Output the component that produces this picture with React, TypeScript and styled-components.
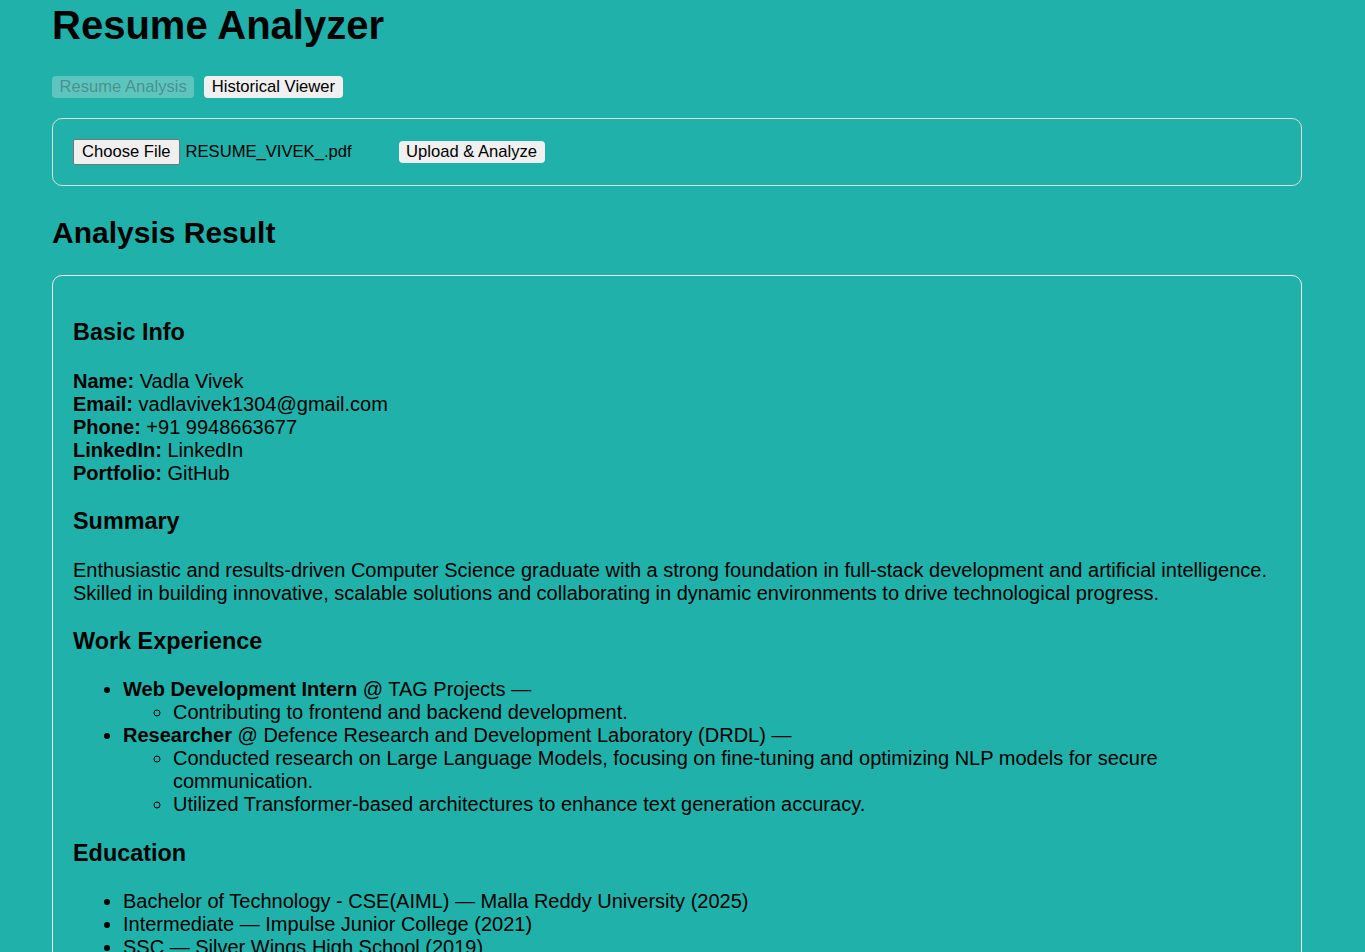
import { FC } from 'react';
import styled, { createGlobalStyle } from 'styled-components';

const GlobalStyle = createGlobalStyle`
  html, body {
    margin: 0;
    padding: 0;
    background: #20b2aa;
  }
  body {
    font-family: "Liberation Sans", Arial, sans-serif;
    font-size: 20px;
    color: #000;
  }
`;

const Page = styled.div`
  width: 1250px;
  margin-left: 52px;
  padding-top: 3px;
`;

const Title = styled.h1`
  font-size: 40px;
  font-weight: bold;
  margin: 0 0 28px;
`;

const Tabs = styled.div`
  display: flex;
  gap: 10px;
  margin-bottom: 20px;
`;

const Button = styled.button`
  font-family: inherit;
  font-size: 16.6px;
  line-height: 18px;
  padding: 2px 7.5px;
  border: none;
  border-radius: 4px;
  background: #f0f0f0;
  color: #000;
  cursor: pointer;
  &:disabled {
    background: rgba(239, 239, 239, 0.3);
    color: rgba(16, 16, 16, 0.3);
    cursor: default;
  }
`;

const Card = styled.div<{ $border: string }>`
  border: 1px solid ${({ $border }) => $border};
  border-radius: 10px;
  padding: 20px;
`;

const UploadRow = styled.div`
  display: flex;
  align-items: center;
`;

const FileButton = styled.span`
  display: inline-block;
  font-size: 16.6px;
  line-height: 20px;
  padding: 2px 8px;
  background: #efefef;
  border: 1px solid #767676;
  border-radius: 2px;
  margin-right: 6px;
`;

const FileName = styled.span`
  font-size: 16.6px;
  width: 213px;
`;

const SectionTitle = styled.h2`
  font-size: 30px;
  margin: 30px 0 25px;
`;

const H3 = styled.h3`
  font-size: 23.4px;
  margin: 23.4px 0;
`;

const P = styled.p`
  margin: 20px 0;
`;

const List = styled.ul<{ $nested?: boolean }>`
  padding-left: 50px;
  margin: ${({ $nested }) => ($nested ? '0' : '20px 0')};
  list-style-type: ${({ $nested }) => ($nested ? 'circle' : 'disc')};
`;

const info: [string, string][] = [
  ['Name', 'Vadla Vivek'],
  ['Email', 'vadlavivek1304@gmail.com'],
  ['Phone', '+91 9948663677'],
  ['LinkedIn', 'LinkedIn'],
  ['Portfolio', 'GitHub'],
];

const jobs = [
  {
    role: 'Web Development Intern',
    org: 'TAG Projects',
    points: ['Contributing to frontend and backend development.'],
  },
  {
    role: 'Researcher',
    org: 'Defence Research and Development Laboratory (DRDL)',
    points: [
      'Conducted research on Large Language Models, focusing on fine-tuning and optimizing NLP models for secure communication.',
      'Utilized Transformer-based architectures to enhance text generation accuracy.',
    ],
  },
];

const education = [
  'Bachelor of Technology - CSE(AIML) — Malla Reddy University (2025)',
  'Intermediate — Impulse Junior College (2021)',
  'SSC — Silver Wings High School (2019)',
];

const App: FC = () => (
  <>
    <GlobalStyle />
    <Page>
      <Title>Resume Analyzer</Title>
      <Tabs>
        <Button disabled>Resume Analysis</Button>
        <Button>Historical Viewer</Button>
      </Tabs>
      <Card $border="#dddddd">
        <UploadRow>
          <FileButton>Choose File</FileButton>
          <FileName>RESUME_VIVEK_.pdf</FileName>
          <Button>Upload &amp; Analyze</Button>
        </UploadRow>
      </Card>
      <SectionTitle>Analysis Result</SectionTitle>
      <Card $border="#eeeeee">
        <H3>Basic Info</H3>
        <P>
          {info.map(([k, v], i) => (
            <span key={k}>
              <strong>{k}:</strong> {v}
              {i < info.length - 1 && <br />}
            </span>
          ))}
        </P>
        <H3>Summary</H3>
        <P>
          Enthusiastic and results-driven Computer Science graduate with a strong foundation in
          full-stack development and artificial intelligence. Skilled in building innovative,
          scalable solutions and collaborating in dynamic environments to drive technological
          progress.
        </P>
        <H3>Work Experience</H3>
        <List>
          {jobs.map((j) => (
            <li key={j.role}>
              <strong>{j.role}</strong> @ {j.org} —
              <List $nested>
                {j.points.map((p) => (
                  <li key={p}>{p}</li>
                ))}
              </List>
            </li>
          ))}
        </List>
        <H3>Education</H3>
        <List>
          {education.map((e) => (
            <li key={e}>{e}</li>
          ))}
        </List>
      </Card>
    </Page>
  </>
);

export default App;
